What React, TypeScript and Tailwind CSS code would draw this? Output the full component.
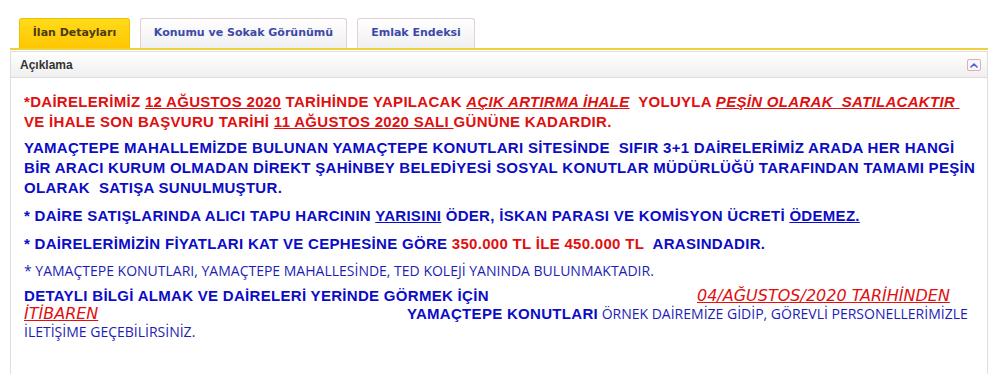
import React from 'react';

const ARIAL = "font-['Liberation_Sans',Arial,sans-serif]";
const THIN = "font-['Open_Sans','DejaVu_Sans',sans-serif]";
const BIG = "text-[15px] tracking-[0.3px] font-bold";

function Tab({ label, active }: { label: string; active?: boolean }) {
  return (
    <div
      className={
        active
          ? 'h-[30px] w-[111px] rounded-t-[3px] border border-b-0 border-[#ecc200] bg-gradient-to-b from-[#ffdb1a] to-[#ffc600] flex items-center justify-center text-[11px] font-bold text-[#4b3a12] font-["DejaVu_Sans",sans-serif]'
          : 'h-[30px] rounded-t-[3px] border border-b-0 border-[#e3cfd4] bg-gradient-to-b from-white to-[#f0f0f2] flex items-center justify-center text-[11px] font-bold text-[#3b4aa9] font-["DejaVu_Sans",sans-serif]'
      }
    >
      {label}
    </div>
  );
}

export default function App() {
  const nb = '\u00a0';
  return (
    <div className="min-h-screen bg-white pt-[18px] pl-[10px] pr-[12px] overflow-hidden">
      {/* Tabs */}
      <div className="flex gap-[10px] pl-[9px] border-b-2 border-[#f0cf3a]">
        <Tab label="İlan Detayları" active />
        <div className="w-[207px]">
          <Tab label="Konumu ve Sokak Görünümü" />
        </div>
        <div className="w-[118px]">
          <Tab label="Emlak Endeksi" />
        </div>
      </div>

      {/* Panel */}
      <div className="mt-[1px] border border-b-0 border-[#dedede]">
        <div className="h-[26px] flex items-center justify-between pl-[9px] pr-[6px] bg-gradient-to-b from-white to-[#efefef] border-b border-[#dcdcdc]">
          <span className={`text-[12px] font-bold text-[#333] ${ARIAL}`}>Açıklama</span>
          <span className="w-[14px] h-[12px] rounded-[2px] border border-[#e6a9b0] bg-[#f7f8ff] flex items-center justify-center">
            <svg width="8" height="6" viewBox="0 0 8 6" fill="none">
              <path d="M1 5 L4 2 L7 5" stroke="#4a63c8" strokeWidth="1.6" strokeLinecap="round" strokeLinejoin="round" />
            </svg>
          </span>
        </div>

        <div className="pl-[13px] pr-[12px] pt-[14px] pb-[40px]">
          <p className={`${BIG} leading-[20px] text-[#e01010] whitespace-nowrap ${ARIAL}`}>
            *DAİRELERİMİZ <u>12 AĞUSTOS 2020</u> TARİHİNDE YAPILACAK <u><i>AÇIK ARTIRMA İHALE</i></u>{nb} YOLUYLA{' '}
            <u><i>PEŞİN OLARAK{nb} SATILACAKTIR{nb}</i></u>
            <br />
            VE İHALE SON BAŞVURU TARİHİ <u>11 AĞUSTOS 2020 SALI </u>GÜNÜNE KADARDIR.
          </p>

          <p className={`mt-[6px] ${BIG} leading-[20px] text-[#0c0cc8] whitespace-nowrap ${ARIAL}`}>
            YAMAÇTEPE MAHALLEMİZDE BULUNAN YAMAÇTEPE KONUTLARI SİTESİNDE{nb} SIFIR 3+1 DAİRELERİMİZ ARADA HER HANGİ
            <br />
            BİR ARACI KURUM OLMADAN DİREKT ŞAHİNBEY BELEDİYESİ SOSYAL KONUTLAR MÜDÜRLÜĞÜ TARAFINDAN TAMAMI PEŞİN
            <br />
            OLARAK{nb} SATIŞA SUNULMUŞTUR.
          </p>

          <p className={`mt-[8px] ${BIG} leading-[20px] text-[#0c0cc8] whitespace-nowrap ${ARIAL}`}>
            * DAİRE SATIŞLARINDA ALICI TAPU HARCININ <u>YARISINI</u> ÖDER, İSKAN PARASI VE KOMİSYON ÜCRETİ <u>ÖDEMEZ.</u>
          </p>

          <p className={`mt-[8px] ${BIG} leading-[20px] text-[#0c0cc8] whitespace-nowrap ${ARIAL}`}>
            * DAİRELERİMİZİN FİYATLARI KAT VE CEPHESİNE GÖRE <span className="text-[#e01010]">350.000 TL İLE 450.000 TL</span>
            {nb} ARASINDADIR.
          </p>

          <p className={`mt-[7px] text-[14px] leading-[20px] text-[#1c1cb8] whitespace-nowrap ${THIN}`}>
            * YAMAÇTEPE KONUTLARI, YAMAÇTEPE MAHALLESİNDE, TED KOLEJİ YANINDA BULUNMAKTADIR.
          </p>

          <div className="mt-[6px] leading-[18px] whitespace-nowrap text-[#1c1cb8]">
            <div className="flex items-baseline">
              <span className={`w-[673px] ${BIG} text-[#0c0cc8] ${ARIAL}`}>
                DETAYLI BİLGİ ALMAK VE DAİRELERİ YERİNDE GÖRMEK İÇİN
              </span>
              <span className="text-[16px] italic underline text-[#e01010] font-['DejaVu_Sans',sans-serif]">
                04/AĞUSTOS/2020 TARİHİNDEN
              </span>
            </div>
            <div className="flex items-baseline">
              <span className="w-[383px] text-[16px] italic font-['DejaVu_Sans',sans-serif]">
                <span className="underline text-[#e01010]">İTİBAREN</span>
              </span>
              <span className={`${BIG} text-[#0c0cc8] ${ARIAL}`}>YAMAÇTEPE KONUTLARI</span>
              <span className={`text-[14px] ${THIN}`}>{nb}ÖRNEK DAİREMİZE GİDİP, GÖREVLİ PERSONELLERİMİZLE</span>
            </div>
            <div className={`text-[14px] ${THIN}`}>İLETİŞİME GEÇEBİLİRSİNİZ.</div>
          </div>
        </div>
      </div>
    </div>
  );
}
